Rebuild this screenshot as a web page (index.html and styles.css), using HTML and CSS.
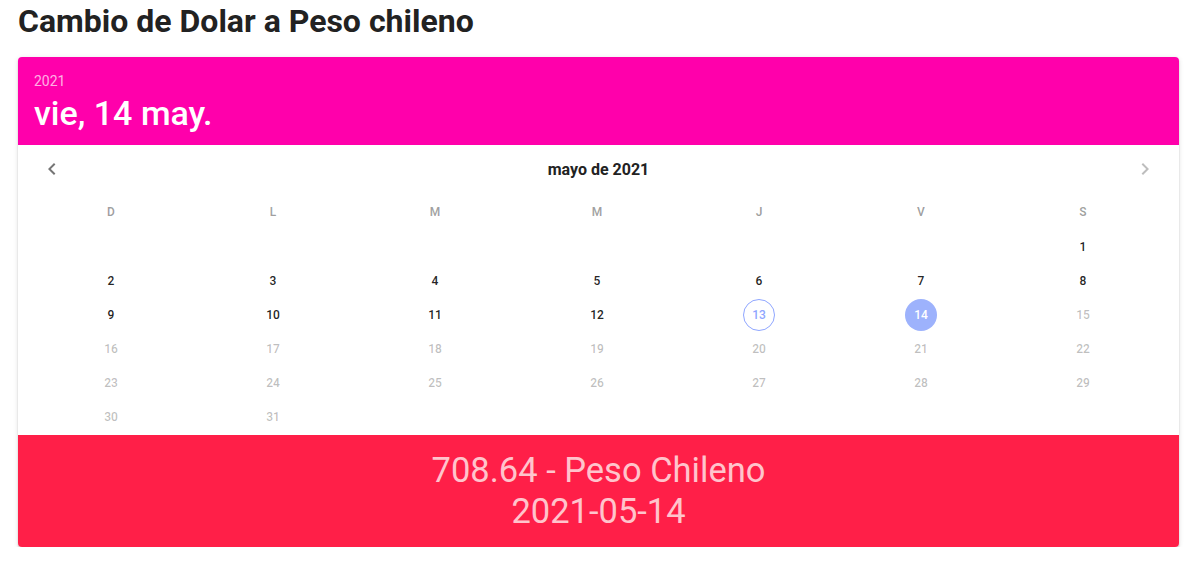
FILE: index.html
```html
<!DOCTYPE html>
<html lang="es">
<head>
  <meta charset="UTF-8">
  <title>Cambio de Dolar a Peso chileno</title>
  <link rel="stylesheet" href="styles.css">
</head>
<body>
  <div class="page">
    <h1 class="title">Cambio de Dolar a Peso chileno</h1>

    <div class="card">
      <div class="picker-title">
        <div class="picker-year">2021</div>
        <div class="picker-date">vie, 14 may.</div>
      </div>

      <div class="picker-body">
        <div class="picker-nav">
          <button class="nav-btn">
            <svg viewBox="0 0 24 24" width="24" height="24"><path d="M15.41 16.58 10.83 12l4.58-4.59L14 6l-6 6 6 6z" fill="currentColor"/></svg>
          </button>
          <div class="picker-month">mayo de 2021</div>
          <button class="nav-btn disabled">
            <svg viewBox="0 0 24 24" width="24" height="24"><path d="M8.59 16.58 13.17 12 8.59 7.41 10 6l6 6-6 6z" fill="currentColor"/></svg>
          </button>
        </div>

        <div class="days weekdays">
          <div class="weekday">D</div>
          <div class="weekday">L</div>
          <div class="weekday">M</div>
          <div class="weekday">M</div>
          <div class="weekday">J</div>
          <div class="weekday">V</div>
          <div class="weekday">S</div>
        </div>

        <div class="days" id="grid"></div>
      </div>

      <div class="result">
        <div>708.64 - Peso Chileno</div>
        <div>2021-05-14</div>
      </div>
    </div>
  </div>

  <script>
    // mayo 2021 empieza en sabado
    const grid = document.getElementById("grid");
    for (let i = 0; i < 6; i++) {
      grid.appendChild(document.createElement("div"));
    }
    for (let d = 1; d <= 31; d++) {
      const cell = document.createElement("div");
      const btn = document.createElement("span");
      btn.className = "day";
      if (d > 14) btn.classList.add("disabled");
      if (d === 13) btn.classList.add("today");
      if (d === 14) btn.classList.add("active");
      btn.textContent = d;
      cell.appendChild(btn);
      grid.appendChild(cell);
    }
  </script>
</body>
</html>
```

FILE: styles.css
```css
body {
  margin: 0;
  font-family: Roboto, "Liberation Sans", sans-serif;
  background: #fff;
  color: rgba(0, 0, 0, 0.87);
}

.page {
  padding: 0 18px;
}

.title {
  margin: 0 0 15px;
  font-size: 32px;
  line-height: 42px;
  font-weight: 700;
  color: #222;
}

.card {
  border-radius: 4px;
  background: #fff;
  box-shadow: 0 3px 1px -2px rgba(0, 0, 0, 0.2), 0 2px 2px 0 rgba(0, 0, 0, 0.14), 0 1px 5px 0 rgba(0, 0, 0, 0.12);
}

.picker-title {
  background: #ff00ab;
  color: #fff;
  padding: 14px 16px 12px;
  border-radius: 4px 4px 0 0;
}

.picker-year {
  font-size: 14px;
  line-height: 20px;
  margin-bottom: 2px;
  color: rgba(255, 255, 255, 0.7);
}

.picker-date {
  font-size: 34px;
  line-height: 40px;
  font-weight: 500;
}

.picker-body {
  padding: 0 15px 1px 12px;
}

.picker-nav {
  display: flex;
  align-items: center;
  height: 36px;
  margin-top: 6px;
  padding: 0 1px 0 4px;
}

.nav-btn {
  width: 36px;
  height: 36px;
  border: none;
  background: none;
  padding: 0;
  display: flex;
  align-items: center;
  justify-content: center;
  color: rgba(0, 0, 0, 0.54);
}

.nav-btn.disabled {
  color: rgba(0, 0, 0, 0.26);
}

.picker-month {
  flex: 1;
  text-align: center;
  font-size: 16px;
  font-weight: 700;
  color: #222;
}

.days {
  display: grid;
  grid-template-columns: repeat(7, 1fr);
  grid-auto-rows: 34px;
}

.weekdays {
  margin: 8px 0 1px;
}

.weekday {
  display: flex;
  align-items: center;
  justify-content: center;
  font-size: 12px;
  font-weight: 600;
  color: rgba(0, 0, 0, 0.38);
}

.days > div {
  display: flex;
  align-items: center;
  justify-content: center;
}

.day {
  width: 32px;
  height: 32px;
  border-radius: 50%;
  display: flex;
  align-items: center;
  justify-content: center;
  box-sizing: border-box;
  font-size: 12px;
  font-weight: 500;
  color: rgba(0, 0, 0, 0.87);
}

.day.disabled {
  color: rgba(0, 0, 0, 0.26);
}

.day.today {
  border: 1px solid #8fa6ff;
  color: #8fa6ff;
}

.day.active {
  background: #9db2fc;
  color: #fff;
}

.result {
  background: #ff1f48;
  color: #ffc4cc;
  text-align: center;
  font-size: 34.5px;
  line-height: 41px;
  padding: 15px 0;
  border-radius: 0 0 4px 4px;
}
```
